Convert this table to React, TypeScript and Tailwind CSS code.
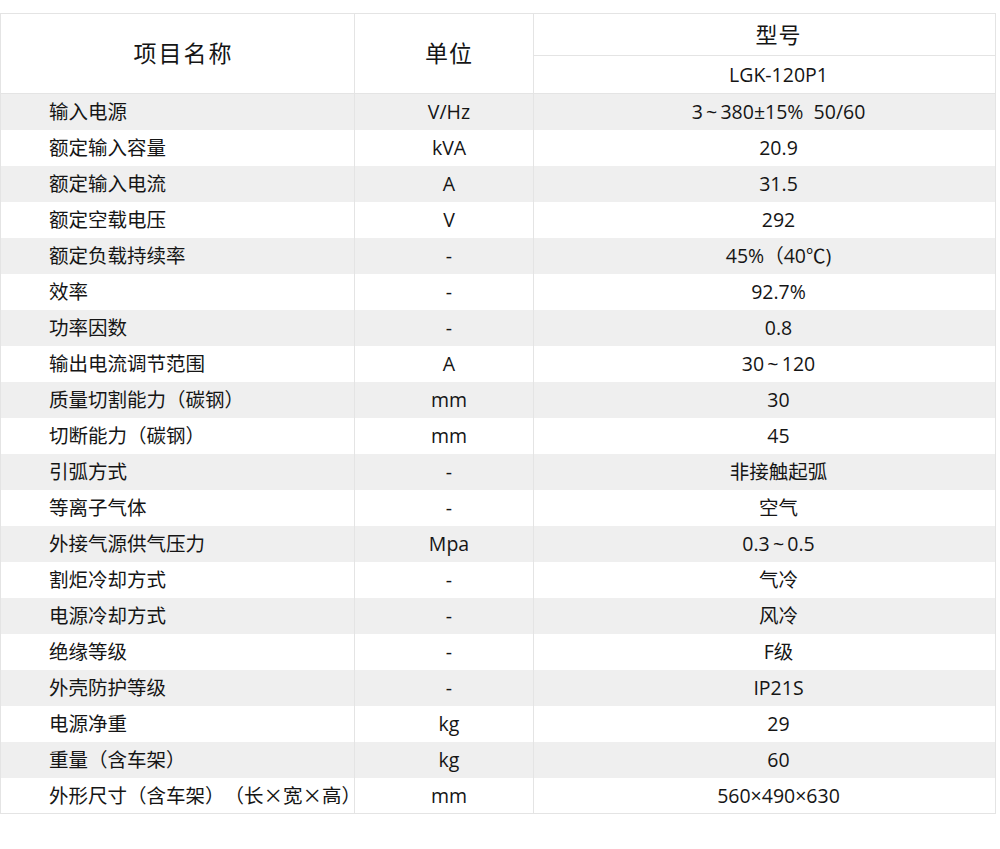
import type { ReactNode } from "react";

const X = () => <span style={{ fontFamily: '"Noto Sans CJK SC", sans-serif' }}>×</span>;

const rows: [ReactNode, string, string][] = [
  ["输入电源", "V/Hz", "3\u2009~\u2009380±15%  50/60"],
  ["额定输入容量", "kVA", "20.9"],
  ["额定输入电流", "A", "31.5"],
  ["额定空载电压", "V", "292"],
  ["额定负载持续率", "-", "45%（40℃)"],
  ["效率", "-", "92.7%"],
  ["功率因数", "-", "0.8"],
  ["输出电流调节范围", "A", "30\u2009~\u2009120"],
  ["质量切割能力（碳钢）", "mm", "30"],
  ["切断能力（碳钢）", "mm", "45"],
  ["引弧方式", "-", "非接触起弧"],
  ["等离子气体", "-", "空气"],
  ["外接气源供气压力", "Mpa", "0.3\u2009~\u20090.5"],
  ["割炬冷却方式", "-", "气冷"],
  ["电源冷却方式", "-", "风冷"],
  ["绝缘等级", "-", "F级"],
  ["外壳防护等级", "-", "IP21S"],
  ["电源净重", "kg", "29"],
  ["重量（含车架）", "kg", "60"],
  [
    <>
      外形尺寸（含车架）（长<X />宽<X />高）
    </>,
    "mm",
    "560×490×630",
  ],
];

export default function App() {
  return (
    <div
      className="min-h-screen bg-white pt-[13px] text-[#151515] [text-spacing-trim:space-all]"
      style={{ fontFamily: '"Open Sans", "Noto Sans CJK SC", sans-serif' }}
    >
      <table className="w-[996px] table-fixed border-collapse border border-[#e4e4e4] text-[19.5px]">
        <colgroup>
          <col className="w-[354px]" />
          <col className="w-[179px]" />
          <col />
        </colgroup>
        <thead>
          <tr className="h-[42px]">
            <th
              rowSpan={2}
              className="border border-[#e4e4e4] pl-[12px] text-center text-[23px] font-normal tracking-[2px]"
            >
              项目名称
            </th>
            <th
              rowSpan={2}
              className="border border-[#e4e4e4] pl-[10px] text-center text-[23px] font-normal tracking-[1px]"
            >
              单位
            </th>
            <th className="border border-[#e4e4e4] pl-[28px] text-center text-[22px] font-normal tracking-[1px]">
              型号
            </th>
          </tr>
          <tr className="h-[38px]">
            <th className="border border-[#e4e4e4] pl-[28px] text-center font-normal">LGK-120P1</th>
          </tr>
        </thead>
        <tbody>
          {rows.map(([name, unit, value], i) => (
            <tr key={i} className={`h-[36px] ${i % 2 === 0 ? "bg-[#efefef]" : "bg-white"}`}>
              <td className="border-x border-[#e4e4e4] pl-[48px] whitespace-nowrap">{name}</td>
              <td className="border-x border-[#e4e4e4] pl-[10px] text-center">{unit}</td>
              <td className="border-x border-[#e4e4e4] pl-[28px] text-center whitespace-pre">{value}</td>
            </tr>
          ))}
        </tbody>
      </table>
    </div>
  );
}
